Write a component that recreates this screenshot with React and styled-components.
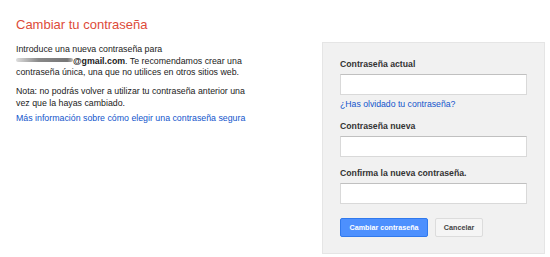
import React from 'react';
import styled, { createGlobalStyle } from 'styled-components';

const GlobalStyle = createGlobalStyle`
  body {
    margin: 0;
    background: #fff;
    font-family: "Liberation Sans", Arial, sans-serif;
    color: #222;
  }
`;

const Page = styled.div`
  display: flex;
  justify-content: space-between;
  padding: 16px 5px 0 16px;
`;

const Intro = styled.div`
  width: 232px;
`;

const Title = styled.h1`
  margin: 0 0 10px;
  font-size: 13px;
  line-height: 18px;
  font-weight: normal;
  color: #dd4b39;
`;

const Para = styled.p`
  margin: 0 0 ${p => p.gap || '7px'};
  font-size: 8.8px;
  line-height: 11.7px;
  color: #222;
`;

const Redacted = styled.span`
  display: inline-block;
  width: 57px;
  height: 4px;
  vertical-align: 2px;
  border-radius: 2px;
  background: linear-gradient(90deg, #ddd, #888 40%, #777 90%, #bbb);
`;

const Email = styled.b`
  font-weight: bold;
`;

const Link = styled.a`
  color: #1155cc;
  text-decoration: none;
`;

const Panel = styled.form`
  width: 187px;
  margin-top: 26px;
  padding: 15px 17px 16px;
  background: #f1f1f1;
  border: 1px solid #e5e5e5;
`;

const Label = styled.label`
  display: block;
  margin: ${p => p.first ? '0' : '10px'} 0 4px;
  font-size: 8.7px;
  line-height: 12px;
  font-weight: bold;
  color: #333;
`;

const Input = styled.input`
  display: block;
  box-sizing: border-box;
  width: 187px;
  height: 21px;
  margin: 0;
  border: 1px solid #d9d9d9;
  border-top-color: #c0c0c0;
  background: #fff;
`;

const Forgot = styled.div`
  margin-top: 3px;
  font-size: 8.7px;
  line-height: 12px;
`;

const Actions = styled.div`
  display: flex;
  gap: 7px;
  margin-top: 14px;
`;

const Button = styled.button`
  height: 19px;
  padding: 0;
  width: ${p => p.primary ? '88px' : '48px'};
  border-radius: 2px;
  font-family: inherit;
  font-size: 7.2px;
  font-weight: bold;
  border: 1px solid ${p => p.primary ? '#3079ed' : '#dcdcdc'};
  background: ${p => p.primary ? '#4d90fe' : '#f5f5f5'};
  color: ${p => p.primary ? '#fff' : '#444'};
`;

export default function App() {
  return (
    <>
      <GlobalStyle />
      <Page>
        <Intro>
          <Title>Cambiar tu contraseña</Title>
          <Para>
            Introduce una nueva contraseña para<br />
            <Redacted /><Email>@gmail.com</Email>. Te recomendamos crear una
            contraseña única, una que no utilices en otros sitios web.
          </Para>
          <Para gap="3px">
            Nota: no podrás volver a utilizar tu contraseña anterior una vez que la hayas cambiado.
          </Para>
          <Para>
            <Link href="#">Más información sobre cómo elegir una contraseña segura</Link>
          </Para>
        </Intro>
        <Panel>
          <Label first>Contraseña actual</Label>
          <Input type="password" />
          <Forgot>
            <Link href="#">¿Has olvidado tu contraseña?</Link>
          </Forgot>
          <Label>Contraseña nueva</Label>
          <Input type="password" />
          <Label>Confirma la nueva contraseña.</Label>
          <Input type="password" />
          <Actions>
            <Button primary type="button">Cambiar contraseña</Button>
            <Button type="button">Cancelar</Button>
          </Actions>
        </Panel>
      </Page>
    </>
  );
}
